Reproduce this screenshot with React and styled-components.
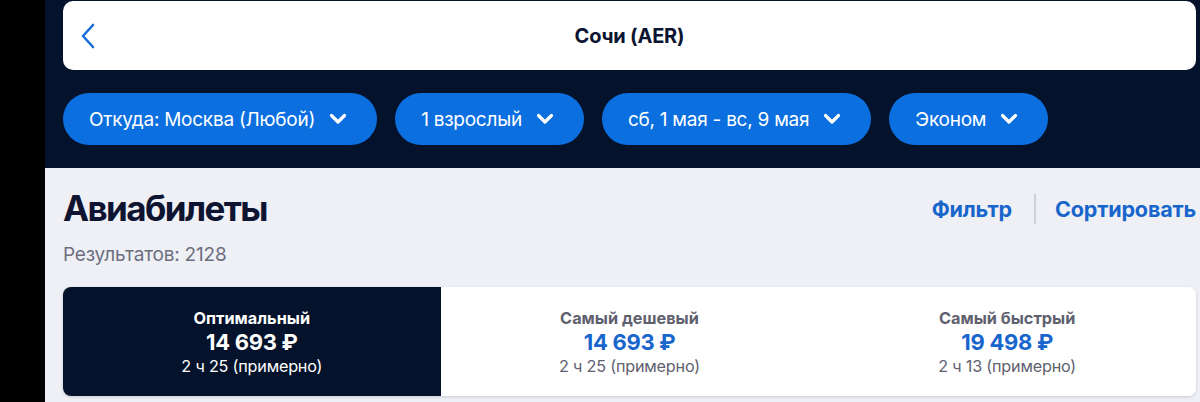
import React from 'react';
import styled, { createGlobalStyle } from 'styled-components';

const GlobalStyle = createGlobalStyle`
  html, body {
    margin: 0;
    padding: 0;
    background: #000;
  }
  body {
    font-family: Inter, "Noto Sans", sans-serif;
    -webkit-font-smoothing: antialiased;
  }
`;

const Screen = styled.div`
  display: flex;
  width: 1200px;
  height: 402px;
  overflow: hidden;
  background: #000;
`;

const Edge = styled.div`
  width: 45px;
  flex-shrink: 0;
  background: #000;
`;

const Main = styled.div`
  flex: 1;
  display: flex;
  flex-direction: column;
  background: #eff0f5;
`;

const TopPanel = styled.div`
  background: #04122b;
  padding: 1px 4px 23px 18px;
`;

const HeaderCard = styled.div`
  display: grid;
  grid-template-columns: 1fr auto 1fr;
  align-items: center;
  height: 69px;
  background: #fff;
  border-radius: 10px;
`;

const BackButton = styled.button`
  justify-self: start;
  display: flex;
  align-items: center;
  padding: 0;
  margin-left: 17px;
  border: none;
  background: none;
  color: #1b6fd8;
  cursor: pointer;
`;

const HeaderTitle = styled.div`
  font-size: 20px;
  font-weight: 700;
  color: #0b1430;
  letter-spacing: -0.2px;
`;

const Pills = styled.div`
  display: flex;
  gap: 18px;
  margin-top: 23px;
`;

const Pill = styled.button`
  display: flex;
  align-items: center;
  gap: 14px;
  height: 52px;
  padding: 0 30px 0 26px;
  border: none;
  border-radius: 26px;
  background: #0b6fe0;
  color: #fff;
  font-family: inherit;
  font-size: 19px;
  font-weight: 400;
  letter-spacing: -0.25px;
  cursor: pointer;
`;

const Content = styled.div`
  padding: 19px 4px 0 18px;
`;

const TitleRow = styled.div`
  display: flex;
  justify-content: space-between;
  align-items: center;
`;

const PageTitle = styled.h1`
  margin: 0;
  font-size: 35px;
  line-height: 43px;
  font-weight: 700;
  color: #0f1431;
  letter-spacing: -1.6px;
`;

const Actions = styled.div`
  display: flex;
  align-items: center;
`;

const ActionLink = styled.a`
  font-size: 21.6px;
  font-weight: 700;
  color: #1866cc;
  letter-spacing: -0.2px;
  cursor: pointer;
`;

const Divider = styled.span`
  width: 2px;
  height: 30px;
  margin: 0 19px 0 22px;
  background: #cdd0da;
`;

const Count = styled.div`
  margin-top: 14px;
  font-size: 19px;
  line-height: 22px;
  color: #6b6e7e;
  letter-spacing: -0.2px;
`;

const Tabs = styled.div`
  display: grid;
  grid-template-columns: repeat(3, 1fr);
  margin-top: 21px;
  height: 109px;
  border-radius: 8px;
  overflow: hidden;
  background: #fff;
  box-shadow: 0 1px 3px rgba(20, 30, 60, 0.18);
`;

const Tab = styled.div`
  display: flex;
  flex-direction: column;
  align-items: center;
  justify-content: center;
  background: ${(p) => (p.active ? '#04122b' : '#fff')};
`;

const TabLabel = styled.div`
  font-size: 16.3px;
  line-height: 22px;
  font-weight: 700;
  color: ${(p) => (p.active ? '#fff' : '#5f616f')};
`;

const TabPrice = styled.div`
  font-size: 22px;
  line-height: 27px;
  font-weight: 700;
  letter-spacing: -0.3px;
  color: ${(p) => (p.active ? '#fff' : '#1866cc')};
`;

const TabTime = styled.div`
  font-size: 16.2px;
  line-height: 20px;
  color: ${(p) => (p.active ? '#fff' : '#5f616f')};
  letter-spacing: -0.2px;
`;

const Chevron = () => (
  <svg width="18" height="12" viewBox="0 0 18 12" fill="none">
    <path d="M2.5 2.5 9 9l6.5-6.5" stroke="#fff" strokeWidth="3.2" strokeLinecap="round" strokeLinejoin="round" />
  </svg>
);

const BackArrow = () => (
  <svg width="16" height="28" viewBox="0 0 16 28" fill="none">
    <path d="M13 3 3 14l10 11" stroke="currentColor" strokeWidth="2.6" strokeLinecap="round" strokeLinejoin="round" />
  </svg>
);

const filters = ['Откуда: Москва (Любой)', '1 взрослый', 'сб, 1 мая - вс, 9 мая', 'Эконом'];

const tabs = [
  { label: 'Оптимальный', price: '14 693 ₽', time: '2 ч 25 (примерно)', active: true },
  { label: 'Самый дешевый', price: '14 693 ₽', time: '2 ч 25 (примерно)' },
  { label: 'Самый быстрый', price: '19 498 ₽', time: '2 ч 13 (примерно)' },
];

const App = () => {
  return (
    <>
      <GlobalStyle />
      <Screen>
        <Edge />
        <Main>
          <TopPanel>
            <HeaderCard>
              <BackButton>
                <BackArrow />
              </BackButton>
              <HeaderTitle>Сочи (AER)</HeaderTitle>
              <span />
            </HeaderCard>
            <Pills>
              {filters.map((f) => (
                <Pill key={f}>
                  {f}
                  <Chevron />
                </Pill>
              ))}
            </Pills>
          </TopPanel>
          <Content>
            <TitleRow>
              <PageTitle>Авиабилеты</PageTitle>
              <Actions>
                <ActionLink>Фильтр</ActionLink>
                <Divider />
                <ActionLink>Сортировать</ActionLink>
              </Actions>
            </TitleRow>
            <Count>Результатов: 2128</Count>
            <Tabs>
              {tabs.map((t) => (
                <Tab key={t.label} active={t.active}>
                  <TabLabel active={t.active}>{t.label}</TabLabel>
                  <TabPrice active={t.active}>{t.price}</TabPrice>
                  <TabTime active={t.active}>{t.time}</TabTime>
                </Tab>
              ))}
            </Tabs>
          </Content>
        </Main>
      </Screen>
    </>
  );
};

export default App;
